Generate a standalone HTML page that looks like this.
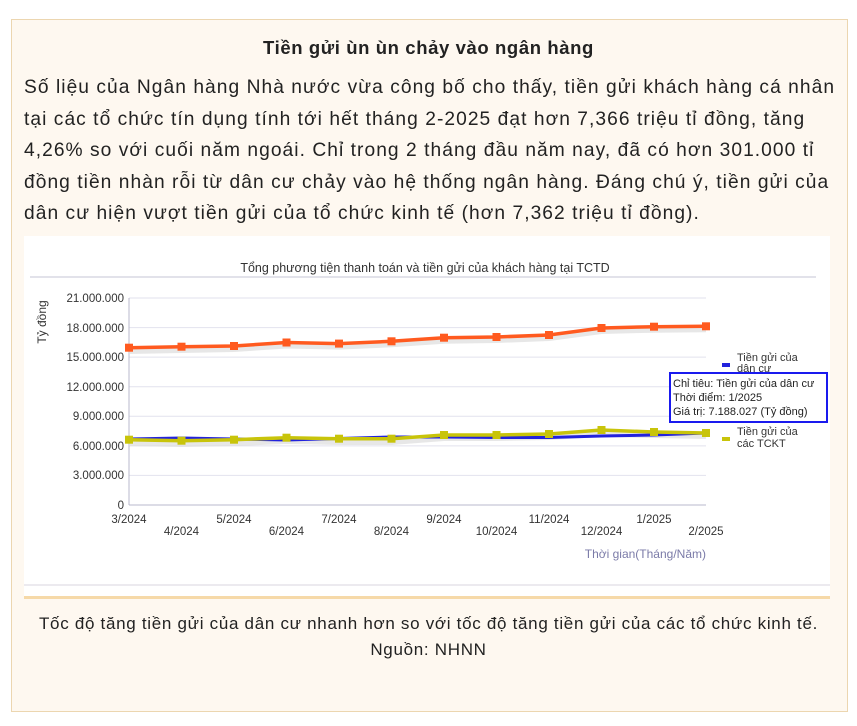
<!DOCTYPE html>
<html><head><meta charset="utf-8"><style>
body{margin:0;background:#fff;width:857px;height:726px;overflow:hidden;font-family:"Liberation Sans",sans-serif;}
.box{position:absolute;left:11px;top:19px;width:835px;height:691px;background:#fef8f0;border:1px solid #ecd6b0;}
.title{position:absolute;left:0;width:857px;top:37px;text-align:center;font-weight:bold;font-size:18.5px;letter-spacing:0.6px;color:#222;}
.body{position:absolute;left:24px;top:72px;font-size:19.2px;letter-spacing:1.05px;line-height:31.5px;color:#222;white-space:nowrap;}
.cap{position:absolute;left:0;width:857px;top:611px;text-align:center;font-size:17px;letter-spacing:0.7px;line-height:26px;color:#222;}
svg{position:absolute;left:0;top:0;}
</style></head><body>
<div class="box"></div>
<div class="title">Tiền gửi ùn ùn chảy vào ngân hàng</div>
<div class="body">Số liệu của Ngân hàng Nhà nước vừa công bố cho thấy, tiền gửi khách hàng cá nhân<br>tại các tổ chức tín dụng tính tới hết tháng 2-2025 đạt hơn 7,366 triệu tỉ đồng, tăng<br>4,26% so với cuối năm ngoái. Chỉ trong 2 tháng đầu năm nay, đã có hơn 301.000 tỉ<br>đồng tiền nhàn rỗi từ dân cư chảy vào hệ thống ngân hàng. Đáng chú ý, tiền gửi của<br>dân cư hiện vượt tiền gửi của tổ chức kinh tế (hơn 7,362 triệu tỉ đồng).</div>
<svg width="857" height="726" font-family="Liberation Sans, sans-serif">
<rect x="24" y="236" width="806" height="360" fill="#fff"/>
<line x1="24" y1="585" x2="830" y2="585" stroke="#e6e3ea" stroke-width="1.5"/>
<rect x="24" y="596" width="806" height="3" fill="#f6d9a8"/>
<line x1="30" y1="277" x2="816" y2="277" stroke="#d8d8e4" stroke-width="1.5"/>
<text x="425" y="272" font-size="12.5" text-anchor="middle" fill="#333">Tổng phương tiện thanh toán và tiền gửi của khách hàng tại TCTD</text>
<g stroke="#e2e2ee" stroke-width="1">
<line x1="129" y1="298" x2="706" y2="298"/><line x1="129" y1="327.6" x2="706" y2="327.6"/>
<line x1="129" y1="357.1" x2="706" y2="357.1"/><line x1="129" y1="386.7" x2="706" y2="386.7"/>
<line x1="129" y1="416.3" x2="706" y2="416.3"/><line x1="129" y1="445.9" x2="706" y2="445.9"/>
<line x1="129" y1="475.4" x2="706" y2="475.4"/></g>
<line x1="129" y1="505" x2="706" y2="505" stroke="#b8b8cc"/>
<line x1="129" y1="298" x2="129" y2="505" stroke="#b8b8cc"/>
<g font-size="11.5" fill="#333" text-anchor="end">
<text x="124" y="302">21.000.000</text><text x="124" y="332">18.000.000</text><text x="124" y="361">15.000.000</text>
<text x="124" y="391">12.000.000</text><text x="124" y="420">9.000.000</text><text x="124" y="450">6.000.000</text>
<text x="124" y="479">3.000.000</text><text x="124" y="509">0</text></g>
<text transform="translate(46,322) rotate(-90)" font-size="12" fill="#333" text-anchor="middle">Tỷ đồng</text>
<g font-size="11.5" fill="#333" text-anchor="middle">
<text x="129" y="523">3/2024</text><text x="181.5" y="535">4/2024</text><text x="234" y="523">5/2024</text>
<text x="286.5" y="535">6/2024</text><text x="339" y="523">7/2024</text><text x="391.5" y="535">8/2024</text>
<text x="444" y="523">9/2024</text><text x="496.5" y="535">10/2024</text><text x="549" y="523">11/2024</text>
<text x="601.5" y="535">12/2024</text><text x="654" y="523">1/2025</text><text x="706" y="535">2/2025</text></g>
<text x="706" y="558" font-size="12" fill="#7b7ba8" text-anchor="end">Thời gian(Tháng/Năm)</text>
<g fill="none" stroke-width="6" stroke="#ddd" opacity="0.7">
<polyline points="129,351 181.5,350 234,349 286.5,345.5 339,346.6 391.5,344.3 444,340.7 496.5,340 549,338 601.5,331 654,329.7 706,329.3"/>
<polyline points="129,443 181.5,444 234,443 286.5,441 339,442 391.5,442 444,438 496.5,438 549,437 601.5,434 654,435 706,436"/>
</g>
<polyline fill="none" stroke="#2222dd" stroke-width="3" points="129,439 181.5,438 234,439 286.5,440 339,438.5 391.5,437 444,437 496.5,437.5 549,437.5 601.5,436 654,435 706,433"/>
<polyline fill="none" stroke="#ff5a1f" stroke-width="3.5" points="129,347.7 181.5,346.7 234,346 286.5,342.5 339,343.6 391.5,341.3 444,337.7 496.5,337 549,335 601.5,328 654,326.7 706,326.3"/>
<polyline fill="none" stroke="#c8c40a" stroke-width="3.5" points="129,439.7 181.5,440.7 234,439.7 286.5,437.7 339,438.7 391.5,438.7 444,435 496.5,435 549,434 601.5,430 654,432 706,433"/>
<g fill="#ff5a1f">
<rect x="125" y="343.7" width="8" height="8"/><rect x="177.5" y="342.7" width="8" height="8"/><rect x="230" y="342" width="8" height="8"/>
<rect x="282.5" y="338.5" width="8" height="8"/><rect x="335" y="339.6" width="8" height="8"/><rect x="387.5" y="337.3" width="8" height="8"/>
<rect x="440" y="333.7" width="8" height="8"/><rect x="492.5" y="333" width="8" height="8"/><rect x="545" y="331" width="8" height="8"/>
<rect x="597.5" y="324" width="8" height="8"/><rect x="650" y="322.7" width="8" height="8"/><rect x="702" y="322.3" width="8" height="8"/></g>
<g fill="#c8c40a">
<rect x="125" y="435.7" width="8" height="8"/><rect x="177.5" y="436.7" width="8" height="8"/><rect x="230" y="435.7" width="8" height="8"/>
<rect x="282.5" y="433.7" width="8" height="8"/><rect x="335" y="434.7" width="8" height="8"/><rect x="387.5" y="434.7" width="8" height="8"/>
<rect x="440" y="431" width="8" height="8"/><rect x="492.5" y="431" width="8" height="8"/><rect x="545" y="430" width="8" height="8"/>
<rect x="597.5" y="426" width="8" height="8"/><rect x="650" y="428" width="8" height="8"/><rect x="702" y="429" width="8" height="8"/></g>
<rect x="722" y="363" width="8" height="4" fill="#2222dd"/>
<text x="737" y="361" font-size="11" fill="#333">Tiền gửi của</text>
<text x="737" y="372" font-size="11" fill="#333">dân cư</text>
<rect x="722" y="437" width="8" height="4" fill="#c8c40a"/>
<text x="737" y="435" font-size="11" fill="#333">Tiền gửi của</text>
<text x="737" y="447" font-size="11" fill="#333">các TCKT</text>
<rect x="670" y="373" width="157" height="49" fill="#fff" stroke="#1a1aee" stroke-width="2"/>
<g font-size="11" fill="#222"><text x="673" y="387">Chỉ tiêu: Tiền gửi của dân cư</text>
<text x="673" y="401">Thời điểm: 1/2025</text><text x="673" y="415">Giá trị: 7.188.027 (Tỷ đồng)</text></g>
</svg>
<div class="cap">Tốc độ tăng tiền gửi của dân cư nhanh hơn so với tốc độ tăng tiền gửi của các tổ chức kinh tế.<br>Nguồn: NHNN</div>
</body></html>
